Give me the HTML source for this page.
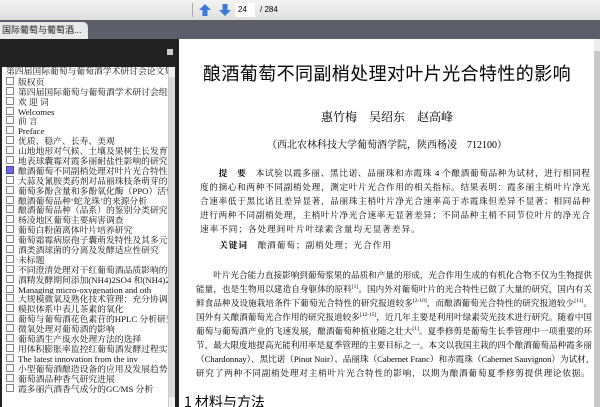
<!DOCTYPE html>
<html><head><meta charset="utf-8"><style>
*{margin:0;padding:0;box-sizing:border-box}
body{width:600px;height:407px;overflow:hidden;background:#fff;font-family:"Liberation Serif","Noto Serif CJK SC",serif;position:relative}
#tb{position:absolute;left:0;top:0;width:600px;height:20px;background:linear-gradient(#f4f4f4,#dedede)}
#tabbar{position:absolute;left:0;top:20px;width:600px;height:19px;background:#5e5e6a}
#tab{position:absolute;left:0;top:22px;width:88px;height:17px;background:#e9e9e9;border-radius:0 5px 0 0;font:9px "Liberation Sans","Noto Sans CJK SC",sans-serif;line-height:17px;padding-left:2px;color:#222;white-space:nowrap;overflow:hidden}
#left{position:absolute;left:0;top:39px;width:179px;height:368px;background:#222}
#tree{position:absolute;left:2px;top:67px;width:173px;height:340px;background:#fff;overflow:hidden;font:8.8px "Liberation Serif","Noto Serif CJK SC",serif;color:#111}
#tree div{height:9.9px;line-height:9.9px;white-space:nowrap;padding-left:4px;overflow:hidden}
#tree div:before{content:"";display:inline-block;width:6px;height:6px;border:1px solid #888;margin-right:4px;vertical-align:0}
#tree div.r:before{display:none}
#tree div.sel:before{background:#6a6ad0;border-color:#44a}
#sb{position:absolute;left:168px;top:67px;width:7px;height:340px;background:#eee;border-left:1px solid #ccc}
#page{position:absolute;left:180px;top:39px;width:414px;height:368px;background:#fff;color:#000;overflow:hidden}
#rsb{position:absolute;left:594px;top:39px;width:6px;height:368px;background:#c8c8c8}
.t{position:absolute;left:0;width:414px;text-align:center;white-space:nowrap}
.p{position:absolute;left:20px;width:390px;height:14px;font-size:8.6px;line-height:14px;text-align:justify;text-align-last:justify;white-space:nowrap;overflow:hidden}
sup{font-size:5.5px;line-height:0;vertical-align:4px}
</style></head><body>
<div id="tb">
<div style="position:absolute;left:192px;top:3px;width:1px;height:14px;background:#aaa"></div>
<svg style="position:absolute;left:198px;top:3px" width="14" height="14"><polygon points="7,1 13,7 9.5,7 9.5,13 4.5,13 4.5,7 1,7" fill="#3a7ad8"/></svg>
<svg style="position:absolute;left:218px;top:3px" width="14" height="14"><polygon points="7,13 13,7 9.5,7 9.5,1 4.5,1 4.5,7 1,7" fill="#3a7ad8"/></svg>
<div style="position:absolute;left:235px;top:3px;width:20px;height:14px;background:#fff;font:8px 'Liberation Sans';line-height:14px;padding-left:3px">24</div>
<div style="position:absolute;left:260px;top:3px;font:8px 'Liberation Sans';line-height:14px">/ 284</div>
</div>
<div id="tabbar"></div>
<div id="tab">国际葡萄与葡萄酒... &nbsp;✕</div>
<div id="left"><div style="position:absolute;left:167px;top:10px;width:6px;height:6px;background:#ccc"></div></div>
<div id="tree">
<div class="r">第四届国际葡萄与葡萄酒学术研讨会论文集</div>
<div>版权页</div><div>第四届国际葡萄与葡萄酒学术研讨会组</div><div>欢 迎 词</div><div>Welcomes</div><div>前 言</div><div>Preface</div><div>优质、稳产、长寿、美观</div><div>山地地形对气候、土壤及果树生长发育</div><div>地表球囊霉对霞多丽耐盐性影响的研究</div><div class="sel">酿酒葡萄不同副梢处理对叶片光合特性</div><div>大蒜及氰胺类药剂对品丽珠枝条萌芽的</div><div>葡萄多酚含量和多酚氧化酶（PPO）活性</div><div>酿酒葡萄品种‘蛇龙珠’的来源分析</div><div>酿酒葡萄品种（品系）的鉴别分类研究</div><div>杨凌地区葡萄主要病害调查</div><div>葡萄白粉菌离体叶片培养研究</div><div>葡萄霜霉病原孢子囊萌发特性及其多元</div><div>酒类酒球菌的分离及发酵适应性研究</div><div>未标题</div><div>不同澄清处理对干红葡萄酒品质影响的</div><div>酒精发酵期间添加(NH4)2SO4 和(NH4)2</div><div>Managing micro-oxygenation and oth</div><div>大规模微氧及熟化技术管理：充分协调</div><div>模拟体系中表儿茶素的氧化</div><div>葡萄与葡萄酒花色素苷的HPLC 分析研究</div><div>微氧处理对葡萄酒的影响</div><div>葡萄酒生产废水处理方法的选择</div><div>用体积膨胀率监控红葡萄酒发酵过程实</div><div>The latest innovation from the inv</div><div>小型葡萄酒酿造设备的应用及发展趋势</div><div>葡萄酒品种香气研究进展</div><div>霞多丽汽酒香气成分的GC/MS 分析</div>
</div>
<div id="sb"><div style="position:absolute;left:0;top:10px;width:6px;height:320px;background:#d8d8d8"></div></div>
<div id="page">
<div class="t" style="top:21px;font:18px 'Noto Sans CJK SC',sans-serif;letter-spacing:0.4px">酿酒葡萄不同副梢处理对叶片光合特性的影响</div>
<div class="t" style="top:69px;font-size:12px">惠竹梅　吴绍东　赵高峰</div>
<div class="t" style="top:97px;font-size:10px">（西北农林科技大学葡萄酒学院，陕西杨凌　712100）</div>
<div class="p" style="top:127px">　　<b>提　要</b>　本试验以霞多丽、黑比诺、品丽珠和赤霞珠 4 个酿酒葡萄品种为试材，进行相同程</div>
<div class="p" style="top:141px">度的摘心和两种不同副梢处理，测定叶片光合作用的相关指标。结果表明：霞多丽主梢叶片净光</div>
<div class="p" style="top:155px">合速率低于黑比诺且差异显著，品丽珠主梢叶片净光合速率高于赤霞珠但差异不显著；相同品种</div>
<div class="p" style="top:169px">进行两种不同副梢处理，主梢叶片净光合速率无显著差异；不同品种主梢不同节位叶片的净光合</div>
<div class="p" style="top:183px;text-align-last:left;letter-spacing:1px">速率不同；各处理间叶片叶绿素含量均无显著差异。</div>
<div class="p" style="top:199px;text-align-last:left;letter-spacing:1px">　　<b>关键词</b>　酿酒葡萄；副梢处理；光合作用</div>
<div class="p" style="top:229px;left:16px;width:396px">　　叶片光合能力直接影响到葡萄浆果的品质和产量的形成，光合作用生成的有机化合物不仅为生物提供</div>
<div class="p" style="top:243px;left:16px;width:396px">能量，也是生物用以建造自身躯体的原料<sup>[1]</sup>。国内外对葡萄叶片的光合特性已做了大量的研究，国内有关</div>
<div class="p" style="top:257px;left:16px;width:396px">鲜食品种及设施栽培条件下葡萄光合特性的研究报道较多<sup>[2-10]</sup>，而酿酒葡萄光合特性的研究报道较少<sup>[11]</sup>。</div>
<div class="p" style="top:271px;left:16px;width:396px">国外有关酿酒葡萄光合作用的研究报道较多<sup>[12-15]</sup>，近几年主要是利用叶绿素荧光技术进行研究。随着中国</div>
<div class="p" style="top:285px;left:16px;width:396px">葡萄与葡萄酒产业的飞速发展，酿酒葡萄种植业随之壮大<sup>[1]</sup>。夏季修剪是葡萄生长季管理中一项重要的环</div>
<div class="p" style="top:299px;left:16px;width:396px">节，最大限度地提高光能利用率是夏季管理的主要目标之一。本文以我国主栽的四个酿酒葡萄品种霞多丽</div>
<div class="p" style="top:313px;left:16px;width:396px">（Chardonnay）、黑比诺（Pinot Noir）、品丽珠（Cabernet Franc）和赤霞珠（Cabernet Sauvignon）为试材，</div>
<div class="p" style="top:327px;left:16px;width:396px;text-align-last:left;letter-spacing:0.8px">研究了两种不同副梢处理对主梢叶片光合特性的影响，以期为酿酒葡萄夏季修剪提供理论依据。</div>
<div class="p" style="top:353px;left:4px;height:18px;line-height:18px;font:14px 'Noto Sans CJK SC',sans-serif;text-align-last:left">1 材料与方法</div>
</div>
<div id="rsb"><div style="position:absolute;left:0;top:0;width:6px;height:12px;background:#eee"></div></div>
</body></html>
